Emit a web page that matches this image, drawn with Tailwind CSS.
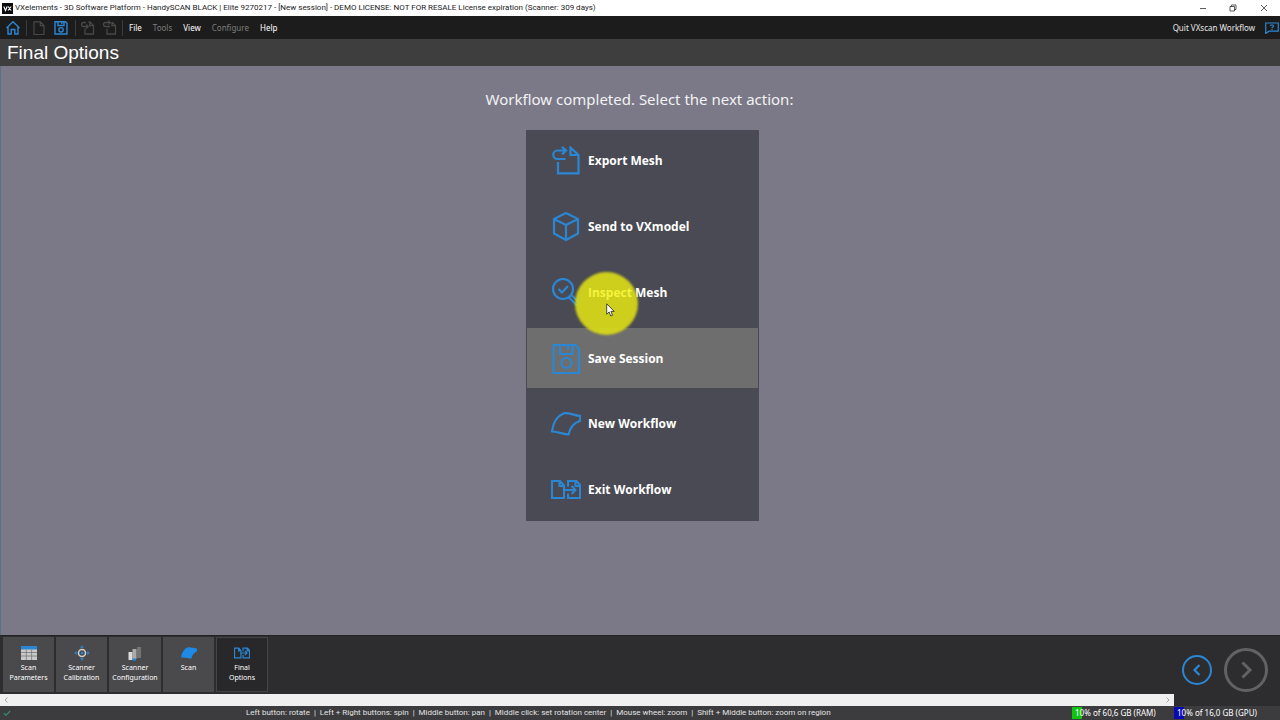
<!DOCTYPE html>
<html lang="en">
<head>
  <meta charset="UTF-8" />
  <meta name="viewport" content="width=device-width, initial-scale=1.0"/>
  <title>VXelements - Final Options</title>
  <script src="https://cdn.jsdelivr.net/npm/@tailwindcss/browser@4"></script>
</head>

<body class="h-screen flex flex-col overflow-hidden bg-[#2d2d30] font-['Noto_Sans',sans-serif] text-white">

  <!-- Window title bar -->
  <header class="h-4 shrink-0 flex items-center bg-white text-black pl-[2px]">
    <svg class="w-[11px] h-[11px] mr-[2px]" viewBox="0 0 11 11" fill="none">
      <rect width="11" height="11" fill="#0b0b0d"/>
      <path d="M1.8 3.5l1.7 4 1.7-4M6 3.5l3.2 4M9.2 3.5L6 7.5" stroke="#fff" stroke-width="1.1"/>
    </svg>
    <span class="font-['Roboto',sans-serif] text-[8px] leading-4 whitespace-nowrap text-[#222]">VXelements - 3D Software Platform - HandySCAN BLACK | Elite 9270217 - [New session] - DEMO LICENSE: NOT FOR RESALE License expiration (Scanner: 309 days)</span>
    <div class="ml-auto flex">
      <button class="w-[30px] h-4 flex items-center justify-center" aria-label="Minimize">
        <svg class="w-2 h-2" viewBox="0 0 8 8"><path d="M1 4.5h6" stroke="#333" stroke-width=".8"/></svg>
      </button>
      <button class="w-[30px] h-4 flex items-center justify-center" aria-label="Restore">
        <svg class="w-2 h-2" viewBox="0 0 8 8" fill="none" stroke="#333" stroke-width=".8"><path d="M1 2.5h4.5V7H1zM2.5 2.5V1H7v4.5H5.5"/></svg>
      </button>
      <button class="w-[32px] h-4 flex items-center justify-center" aria-label="Close">
        <svg class="w-2 h-2" viewBox="0 0 8 8"><path d="M1 1l6 6M7 1L1 7" stroke="#333" stroke-width=".8"/></svg>
      </button>
    </div>
  </header>

  <!-- Toolbar and menu -->
  <nav class="h-[23px] shrink-0 flex items-center bg-[#1c1c1c] pl-[5px] text-[8px]">
    <button aria-label="Home">
      <svg class="w-4 h-4" viewBox="0 0 16 16" fill="none" stroke="#2b87d3" stroke-width="1.4"><path d="M1.5 8L8 1.8 14.500 8M3 7v7h3.200V9.500h3.600V14H13V7"/></svg>
    </button>
    <span class="w-px h-4 bg-[#3c3c3c] ml-[5px] mr-[4px]"></span>
    <button aria-label="New session">
      <svg class="w-4 h-4" viewBox="0 0 16 16" fill="none" stroke="#484848" stroke-width="1.200"><path d="M3 1.800h6.500L13 5.500v9H3zM9.300 2v3.700H13"/></svg>
    </button>
    <button class="ml-[6px]" aria-label="Save session">
      <svg class="w-4 h-4" viewBox="0 0 16 16" fill="none" stroke="#2b87d3" stroke-width="1.4"><path d="M2 1.800h10.500L14 3.300V14H2zM5 2v3.500h6V2M8.800 2v2"/><circle cx="8" cy="9.800" r="2.200"/></svg>
    </button>
    <span class="w-px h-4 bg-[#3c3c3c] ml-[6px] mr-[4px]"></span>
    <button disabled aria-label="Import">
      <svg class="w-4 h-4" viewBox="0 0 16 16" fill="none" stroke="#484848" stroke-width="1.300"><path d="M8.500 2H10l3.500 3.500v8.500H5V8.500M9.800 2v3.700h3.500M6 2.500H3.500a1.700 1.700 0 0 0 0 4H8M6.300 4.500l2 2-2 2"/></svg>
    </button>
    <button disabled class="ml-[6px]" aria-label="Export">
      <svg class="w-4 h-4" viewBox="0 0 16 16" fill="none" stroke="#484848" stroke-width="1.300"><path d="M10 2l3.500 3.500v8.500H5V8.500M10 2v3.700h3.500M8 6.500H3.500a1.700 1.700 0 0 1 0-4H8M6.300.600l2 2-2 2"/></svg>
    </button>
    <span class="w-px h-4 bg-[#3c3c3c] ml-[4px] mr-[6px]"></span>
    <div class="flex gap-[11px]">
      <button>File</button>
      <button disabled class="text-[#7c7c7c]">Tools</button>
      <button>View</button>
      <button disabled class="text-[#7c7c7c]">Configure</button>
      <button>Help</button>
    </div>
    <button class="ml-auto text-[#e8e8e8]">Quit VXscan Workflow</button>
    <button class="ml-[10px] mr-px" aria-label="Help">
      <svg class="w-[14px] h-3" viewBox="0 0 14 12" fill="none" stroke="#2b87d3" stroke-width="1.200"><path d="M.700 1h12.600v8.200H4L.700 11.500zM5.500 4c0-1.700 3-1.700 3 0 0 1-1.500 1-1.500 2.200M7 7v1"/></svg>
    </button>
  </nav>

  <h1 class="h-[27px] shrink-0 bg-[#3e3e3e] pl-[7px] font-['Liberation_Sans',sans-serif] text-[19px] leading-[27px]">Final Options</h1>

  <main class="flex-1 flex flex-col items-center bg-[#7b7987] border-l border-[#5b7186] pr-[2px] pt-[22px]">
    <p class="text-[15px] leading-[22px] text-[#f2f2f4]">Workflow completed. Select the next action:</p>

    <div class="relative mt-5 ml-[6px] w-[233px] bg-[#4a4a54] px-px pb-px flex flex-col gap-[6px] font-['Open_Sans',sans-serif] font-bold text-[12px]">
      <button class="h-[60px] pl-6 pt-px flex items-center gap-[7px]">
        <svg class="w-[30px] h-[30px]" viewBox="0 0 30 30" fill="none" stroke="#2b87d3" stroke-width="2.200"><path d="M14.500 13H6.500a4.200 4.200 0 0 1 0-8.500H15M11 .800l4 3.800-4 3.800M7 16v11.300h20.500V9L19.500 1.500V9h8M19.500 1.500l8 7.800"/></svg>
        Export Mesh
      </button>
      <button class="h-[60px] pl-6 pt-px flex items-center gap-[7px]">
        <svg class="w-[30px] h-[30px]" viewBox="0 0 30 30" fill="none" stroke="#2b87d3" stroke-width="2.200" stroke-linejoin="round"><path d="M15 1l12 6v14.500l-12 6.500L3 21.500V7zM3 7l12 6 12-6M15 13v15"/></svg>
        Send to VXmodel
      </button>
      <button class="h-[60px] pl-6 pt-px flex items-center gap-[7px]">
        <svg class="w-[30px] h-[30px]" viewBox="0 0 30 30" fill="none" stroke="#2b87d3" stroke-width="2.200"><circle cx="12" cy="11" r="10"/><path d="M7.500 11l3.500 3.500L17 8M18 19.500l8 8M20.500 17l8 8"/></svg>
        <span><span class="relative z-10 text-[#f4f43c]">Inspect</span> Mesh</span>
      </button>
      <button class="h-[60px] pl-6 pt-px flex items-center gap-[7px] bg-[#6e6e6e]">
        <svg class="w-[30px] h-[30px]" viewBox="0 0 30 30" fill="none" stroke="#2b87d3" stroke-width="2.200"><path d="M2.500 1h22l3.500 4v24H2.500zM9 1v9h12.500V1M17 1v5"/><circle cx="15.500" cy="19" r="5"/></svg>
        Save Session
      </button>
      <button class="h-[60px] pl-6 flex items-center gap-[7px]">
        <svg class="w-[30px] h-[30px]" viewBox="0 0 30 30" fill="none" stroke="#2b87d3" stroke-width="2.200" stroke-linejoin="round"><path d="M1 22.500C2 14 6 7 13 4.200c5-.9 10 2.300 16.500 2.800L29 12c-6 1.500-9.500 5.500-11.500 13.500C12 25.500 8 22.500 1 22.500z"/></svg>
        New Workflow
      </button>
      <button class="h-[60px] pl-6 flex items-center gap-[7px]">
        <svg class="w-[30px] h-[30px]" viewBox="0 0 30 30" fill="none" stroke="#2b87d3" stroke-width="2"><path d="M13 14.500V23H1V6h8l4 4.500v4M8.500 6v5H13M17 11.500V6h8.500l3.500 4v13H17v-4.500M24.500 6v5H29M13 15h11M20.500 11l4 4-4 4"/></svg>
        Exit Workflow
      </button>

      <!-- Click highlight and mouse pointer -->
      <div class="absolute left-[49px] top-[142px] size-[63px] rounded-full bg-[#d9d918]/92 blur-[1px] pointer-events-none"></div>
      <svg class="absolute z-20 left-[80px] top-[173px] w-[9px] h-[14px] pointer-events-none" viewBox="0 0 9 14"><path d="M.700.800v10.400l2.400-2.200 1.700 4 1.700-.7L4.900 8.400h3.300z" fill="#fff" stroke="#222" stroke-width=".8"/></svg>
    </div>
  </main>

  <!-- Workflow steps -->
  <section class="h-[59px] shrink-0 flex items-center justify-between bg-[#2d2d30] border-t border-[#232326] pl-[3px] pr-3 text-[7px] leading-[10px]">
    <div class="flex gap-[2px] pb-px">
      <button class="w-[51px] h-[55px] bg-[#4a4a4c] flex flex-col items-center pt-2">
        <svg class="w-4 h-4 mb-[2px]" viewBox="0 0 16 16"><path d="M0 1h16v14H0z" fill="#c9c9c9"/><path d="M0 1h16v3.500H0z" fill="#2b87d3"/><path d="M0 7.500h16M0 11h16M5.300 4.500V15M10.600 4.500V15" stroke="#777" stroke-width=".8"/></svg>
        Scan<br>Parameters
      </button>
      <button class="w-[51px] h-[55px] bg-[#4a4a4c] flex flex-col items-center pt-2">
        <svg class="w-4 h-4 mb-[2px]" viewBox="0 0 16 16" fill="#2b87d3"><circle cx="8" cy="8" r="3.500" fill="none" stroke="#d0d0d0" stroke-width="1.500"/><circle cx="8" cy="8" r="1.300"/><path d="M8 .2l2 2.500H6zM8 15.800l2-2.500H6zM.2 8l2.500-2v4zM15.800 8l-2.500-2v4z"/></svg>
        Scanner<br>Calibration
      </button>
      <button class="w-[52px] h-[55px] bg-[#4a4a4c] flex flex-col items-center pt-2">
        <svg class="w-4 h-4 mb-[2px]" viewBox="0 0 16 16"><path d="M1.500 7h4v8h-4z" fill="#dcdcdc"/><path d="M5.500 4h4v10h-4z" fill="#aaa"/><path d="M10 2h4v11h-4z" fill="#747474"/><path d="M5 13.500h4.500l-1 2.300H6z" fill="#2b87d3"/></svg>
        Scanner<br>Configuration
      </button>
      <button class="w-[51px] h-[55px] bg-[#4a4a4c] flex flex-col items-center pt-2">
        <svg class="w-4 h-4 mb-[2px]" viewBox="0 0 16 16"><path d="M.3 12.500C.6 8 3 3.500 7 2.200c3-.4 5.800 1 9 1.300v3c-3 1-4.600 3-5.600 7-3 0-6-1.300-10.100-1z" fill="#1c8ae6"/></svg>
        Scan
      </button>
      <button class="w-[52px] h-[55px] bg-[#28282a] border border-[#454548] flex flex-col items-center pt-[7px]">
        <svg class="w-4 h-4 mb-[2px]" viewBox="0 0 30 30" fill="none" stroke="#2b87d3" stroke-width="2.200"><path d="M13 14.500V24H1V6h8l4 4.500v4M8.500 6v5H13M17 11.500V6h8.500l3.500 4v14H17v-5.500M24.500 6v5H29M13 15h11M20.500 11l4 4-4 4"/></svg>
        Final<br>Options
      </button>
    </div>
    <div class="flex items-center gap-3 pt-[10px]">
      <button aria-label="Previous step">
        <svg class="w-[30px] h-[30px]" viewBox="0 0 30 30" fill="none" stroke="#2b87d3" stroke-width="2"><circle cx="15" cy="15" r="14"/><path d="M17.500 10l-5 5 5 5" stroke-width="2.200"/></svg>
      </button>
      <button disabled aria-label="Next step">
        <svg class="w-[44px] h-[44px]" viewBox="0 0 44 44" fill="none" stroke="#626264" stroke-width="3"><circle cx="22" cy="22" r="20.500"/><path d="M18.500 14.500L26 22l-7.500 7.500"/></svg>
      </button>
    </div>
  </section>

  <!-- Horizontal scroll bar -->
  <div class="h-3 shrink-0 mr-[106px] flex items-center justify-between bg-[#f0f0f0] px-[4px]">
    <button aria-label="Scroll left"><svg class="w-1 h-[6px]" viewBox="0 0 4 6" fill="none" stroke="#a5a5a5"><path d="M3.500.5L1 3l2.500 2.500"/></svg></button>
    <button aria-label="Scroll right"><svg class="w-1 h-[6px]" viewBox="0 0 4 6" fill="none" stroke="#a5a5a5"><path d="M.5.5L3 3 .5 5.500"/></svg></button>
  </div>

  <footer class="h-[14px] shrink-0 flex items-center bg-[#3c3c3e] pl-[3px] text-[8px] leading-[14px] text-[#e2e2e2] whitespace-nowrap">
    <svg class="w-2 h-2" viewBox="0 0 8 8" fill="none" stroke="#2f8f6b" stroke-width="1.200"><path d="M.800 4.200L3 6.200 7.200 2"/></svg>
    <p class="ml-[235px] whitespace-pre font-['Roboto',sans-serif]">Left button: rotate  |  Left + Right buttons: spin  |  Middle button: pan  |  Middle click: set rotation center  |  Mouse wheel: zoom  |  Shift + Middle button: zoom on region</p>
    <div class="relative ml-auto w-[98px] h-3 mr-1 pl-[3px] leading-3 text-white">
      <div class="absolute inset-y-0 left-0 bg-[#12c412]" style="width: 10%"></div>
      <span class="relative">10% of 60,6 GB (RAM)</span>
    </div>
    <div class="relative w-[98px] h-3 mr-2 pl-[3px] leading-3 text-white">
      <div class="absolute inset-y-0 left-0 bg-[#0a0ab4]" style="width: 10%"></div>
      <span class="relative">10% of 16,0 GB (GPU)</span>
    </div>
  </footer>

</body>
</html>
